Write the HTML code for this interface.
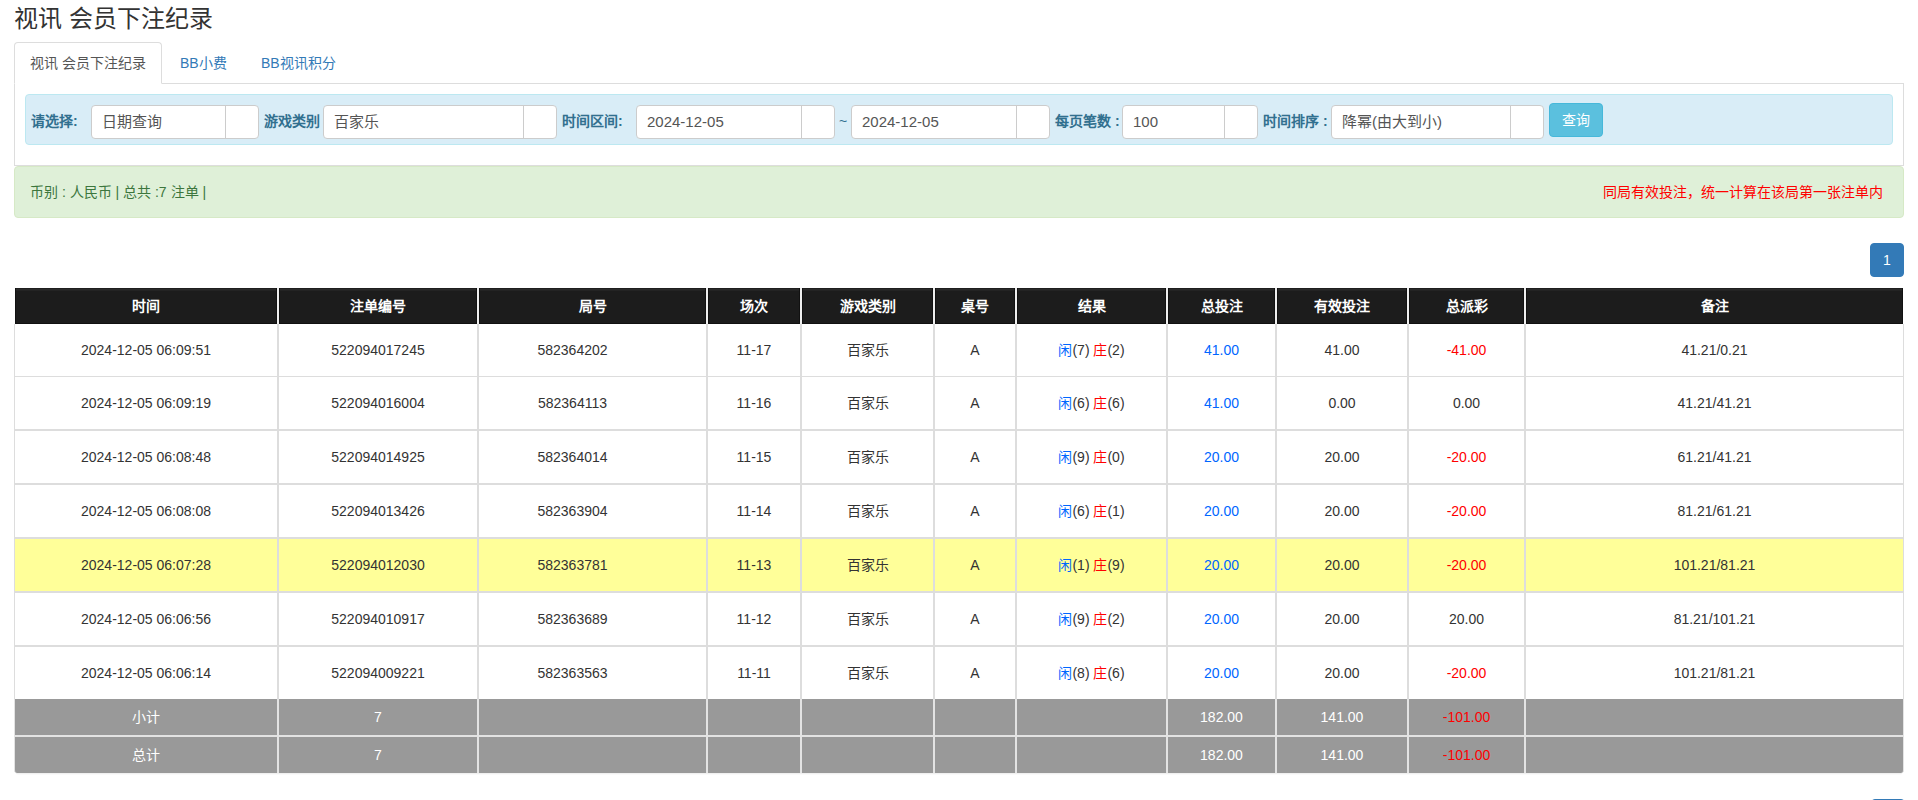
<!DOCTYPE html>
<html lang="zh-CN"><head><meta charset="utf-8">
<style>
*{box-sizing:border-box;margin:0;padding:0}
html,body{width:1918px;height:800px;overflow:hidden;background:#fff}
body{font-family:"Liberation Sans",sans-serif;font-size:14px;color:#333;position:relative;line-height:20px}
.abs{position:absolute;white-space:nowrap}
.title{left:14px;top:4px;font-size:24px;line-height:30px;color:#333}
.tab-act{left:14px;top:42px;width:148px;height:42px;border:1px solid #ddd;border-bottom-color:#fff;border-radius:4px 4px 0 0;background:#fff;z-index:2}
.tabtxt{top:53px;line-height:20px;font-size:14px}
.navline{left:14px;top:83px;width:1890px;height:1px;background:#ddd}
.panel{left:14px;top:83px;width:1890px;height:83px;border:1px solid #ddd;border-top:0}
.ainfo{left:25px;top:94px;width:1868px;height:51px;background:#d9edf7;border:1px solid #bce8f1;border-radius:4px}
.lbl{top:111px;font-weight:bold;color:#31708f;line-height:20px}
.sel{top:105px;height:34px;background:#fff;border:1px solid #ccc;border-radius:4px}
.sel .dv{position:absolute;right:32px;top:0;bottom:0;width:1px;background:#ccc}
.sel span{position:absolute;left:10px;top:6px;line-height:20px;color:#555;font-size:15px}
.btn{left:1549px;top:103px;width:54px;height:34px;background:#5bc0de;border:1px solid #46b8da;border-radius:4px;color:#fff;text-align:center;line-height:32px}
.asucc{left:14px;top:166px;width:1890px;height:52px;background:#dff0d8;border:1px solid #d6e9c6;border-radius:4px}
.gtxt{left:30px;top:182px;color:#3c763d}
.rtxt{left:1603px;top:182px;color:#f00}
.pg{width:34px;height:34px;background:#337ab7;border:1px solid #337ab7;border-radius:4px;color:#fff;text-align:center;line-height:32px;font-size:14px}
table{position:absolute;left:14px;top:288px;width:1890px;border-collapse:separate;border-spacing:0;table-layout:fixed;text-align:center}
th{height:36px;background:#1c1c1c;color:#fff;font-weight:bold;border:0;border-left:1px solid #eee;border-right:1px solid #eee;box-shadow:inset 1px 0 0 #111,inset -1px 0 0 #111,inset 0 -1px 0 #111,inset 0 1px 0 #1f1f1f,inset 0 2px 0 #2a2a2a,inset 0 3px 0 #232323;padding:0}
th:first-child{border-left-color:#fff}th:last-child{border-right-color:#fff}
td{padding:0;border-left:1px solid #ddd;border-right:1px solid #ddd;border-bottom:1px solid #ddd;background:#fff}
tbody tr.r td{height:53px}
tbody tr.r2 td{height:54px;border-top:1px solid #ddd}
tbody tr.r1b td{height:53px}
tr.y td{background:#ffff99}
tr.r td:nth-child(3),tr.r1b td:nth-child(3),tr.r2 td:nth-child(3){padding-right:40px}
tbody tr.last td{border-bottom:0;height:53px}
tr.g2 td:first-child{border-bottom-left-radius:3px}
tr.g2 td:last-child{border-bottom-right-radius:3px}
.shadow{left:16px;top:773px;width:1886px;height:2px;background:linear-gradient(rgba(0,0,0,.08),rgba(0,0,0,0));border-radius:0 0 3px 3px}
tr.g td{background:#999;color:#fff;height:36px;border-color:#e3e3e3;border-bottom:0}
tr.g2 td{border-top:2px solid #e3e3e3;height:38px}
.b{color:#06f}.red,tr.g td.red{color:#f00}
</style></head><body>
<div class="abs title">视讯 会员下注纪录</div>
<div class="abs navline"></div>
<div class="abs tab-act"></div>
<div class="abs tabtxt" style="left:30px;color:#555;z-index:3">视讯 会员下注纪录</div>
<div class="abs tabtxt" style="left:180px;color:#337ab7">BB小费</div>
<div class="abs tabtxt" style="left:261px;color:#337ab7">BB视讯积分</div>
<div class="abs panel"></div>
<div class="abs ainfo"></div>
<div class="abs lbl" style="left:31px">请选择:</div>
<div class="abs sel" style="left:91px;width:168px"><span>日期查询</span><i class="dv"></i></div>
<div class="abs lbl" style="left:264px">游戏类别</div>
<div class="abs sel" style="left:323px;width:234px"><span>百家乐</span><i class="dv"></i></div>
<div class="abs lbl" style="left:562px">时间区间:</div>
<div class="abs sel" style="left:636px;width:199px"><span>2024-12-05</span><i class="dv"></i></div>
<div class="abs" style="left:839px;top:111px;color:#31708f">~</div>
<div class="abs sel" style="left:851px;width:199px"><span>2024-12-05</span><i class="dv"></i></div>
<div class="abs lbl" style="left:1055px">每页笔数 :</div>
<div class="abs sel" style="left:1122px;width:136px"><span>100</span><i class="dv"></i></div>
<div class="abs lbl" style="left:1263px">时间排序 :</div>
<div class="abs sel" style="left:1331px;width:213px"><span>降幂(由大到小)</span><i class="dv"></i></div>
<div class="abs btn">查询</div>
<div class="abs asucc"></div>
<div class="abs gtxt">币别 : 人民币 | 总共 :7 注单 |</div>
<div class="abs rtxt">同局有效投注，统一计算在该局第一张注单内</div>
<div class="abs pg" style="left:1870px;top:243px">1</div>
<div class="abs pg" style="left:1871px;top:799px">1</div>
<div class="abs shadow"></div>
<table>
<colgroup><col style="width:264px"><col style="width:200px"><col style="width:229px"><col style="width:94px"><col style="width:133px"><col style="width:82px"><col style="width:151px"><col style="width:109px"><col style="width:132px"><col style="width:117px"><col style="width:379px"></colgroup>
<thead><tr><th>时间</th><th>注单编号</th><th>局号</th><th>场次</th><th>游戏类别</th><th>桌号</th><th>结果</th><th>总投注</th><th>有效投注</th><th>总派彩</th><th>备注</th></tr></thead>
<tbody>
<tr class="r"><td>2024-12-05 06:09:51</td><td>522094017245</td><td>582364202</td><td>11-17</td><td>百家乐</td><td>A</td><td><span class="b">闲</span>(7) <span class="red">庄</span>(2)</td><td class="b">41.00</td><td>41.00</td><td class="red">-41.00</td><td>41.21/0.21</td></tr>
<tr class="r1b"><td>2024-12-05 06:09:19</td><td>522094016004</td><td>582364113</td><td>11-16</td><td>百家乐</td><td>A</td><td><span class="b">闲</span>(6) <span class="red">庄</span>(6)</td><td class="b">41.00</td><td>0.00</td><td>0.00</td><td>41.21/41.21</td></tr>
<tr class="r2"><td>2024-12-05 06:08:48</td><td>522094014925</td><td>582364014</td><td>11-15</td><td>百家乐</td><td>A</td><td><span class="b">闲</span>(9) <span class="red">庄</span>(0)</td><td class="b">20.00</td><td>20.00</td><td class="red">-20.00</td><td>61.21/41.21</td></tr>
<tr class="r2"><td>2024-12-05 06:08:08</td><td>522094013426</td><td>582363904</td><td>11-14</td><td>百家乐</td><td>A</td><td><span class="b">闲</span>(6) <span class="red">庄</span>(1)</td><td class="b">20.00</td><td>20.00</td><td class="red">-20.00</td><td>81.21/61.21</td></tr>
<tr class="r2 y"><td>2024-12-05 06:07:28</td><td>522094012030</td><td>582363781</td><td>11-13</td><td>百家乐</td><td>A</td><td><span class="b">闲</span>(1) <span class="red">庄</span>(9)</td><td class="b">20.00</td><td>20.00</td><td class="red">-20.00</td><td>101.21/81.21</td></tr>
<tr class="r2"><td>2024-12-05 06:06:56</td><td>522094010917</td><td>582363689</td><td>11-12</td><td>百家乐</td><td>A</td><td><span class="b">闲</span>(9) <span class="red">庄</span>(2)</td><td class="b">20.00</td><td>20.00</td><td>20.00</td><td>81.21/101.21</td></tr>
<tr class="r2 last"><td>2024-12-05 06:06:14</td><td>522094009221</td><td>582363563</td><td>11-11</td><td>百家乐</td><td>A</td><td><span class="b">闲</span>(8) <span class="red">庄</span>(6)</td><td class="b">20.00</td><td>20.00</td><td class="red">-20.00</td><td>101.21/81.21</td></tr>
<tr class="g"><td>小计</td><td>7</td><td></td><td></td><td></td><td></td><td></td><td>182.00</td><td>141.00</td><td class="red">-101.00</td><td></td></tr>
<tr class="g g2"><td>总计</td><td>7</td><td></td><td></td><td></td><td></td><td></td><td>182.00</td><td>141.00</td><td class="red">-101.00</td><td></td></tr>
</tbody></table>
</body></html>
